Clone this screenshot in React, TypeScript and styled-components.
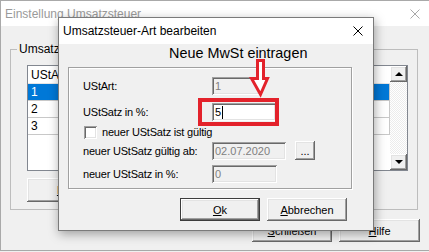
import React from "react";
import styled, { createGlobalStyle, css } from "styled-components";

const GlobalStyle = createGlobalStyle`
  html, body {
    margin: 0;
    padding: 0;
    background: #f0f0f0;
    overflow: hidden;
  }
  body {
    font-family: "Liberation Sans", Arial, sans-serif;
  }
`;

const raised = css`
  background: #f0f0f0;
  box-shadow: inset -1px -1px #696969, inset 1px 1px #fff, inset -2px -2px #a0a0a0,
    inset 2px 2px #e3e3e3;
`;

const sunken = css`
  box-shadow: inset 1px 1px #a0a0a0, inset -1px -1px #fff, inset 2px 2px #696969,
    inset -2px -2px #e3e3e3;
`;

const Desktop = styled.div`
  position: relative;
  width: 429px;
  height: 252px;
  overflow: hidden;
  background: #f0f0f0;
`;

const Window = styled.div`
  width: 429px;
  height: 251px;
  box-sizing: border-box;
  border: 1px solid #a9a9a9;
  border-right: none;
  display: flex;
  flex-direction: column;
  background: #f0f0f0;
`;

const TitleBar = styled.div<{ $active?: boolean }>`
  height: ${(p) => (p.$active ? 26 : 25)}px;
  flex: none;
  display: flex;
  align-items: center;
  justify-content: space-between;
  background: #fff;
  padding: 0 ${(p) => (p.$active ? 10 : 9)}px 0 4px;
  font-size: 12px;
  color: ${(p) => (p.$active ? "#000" : "#9a9a9a")};
`;

const WindowBody = styled.div`
  display: flex;
  flex-direction: column;
  padding: 0 10px 0 9px;
`;

const GroupBox = styled.div`
  margin-top: 23px;
  width: 408px;
  height: 161px;
  box-sizing: border-box;
  border: 1px solid #bdbdbd;
  display: flex;
  flex-direction: column;
`;

const Legend = styled.span`
  align-self: flex-start;
  margin: -8px 0 0 6px;
  padding: 0 2px;
  background: #f0f0f0;
  font-size: 12px;
  line-height: 14px;
  color: #000;
`;

const ListView = styled.div`
  margin: 9px 0 0 16px;
  width: 381px;
  height: 106px;
  box-sizing: border-box;
  border: 1px solid #828790;
  background: #fff;
  display: flex;
`;

const Table = styled.div`
  flex: 1;
  display: flex;
  flex-direction: column;
  font-size: 12px;
`;

const HeaderRow = styled.div`
  height: 17px;
  border-bottom: 1px solid #e5e5e5;
  display: flex;
  align-items: center;
  padding-left: 3px;
  color: #000;
`;

const TableRow = styled.div<{ $selected?: boolean }>`
  height: 16px;
  border-bottom: 1px solid #c8c8c8;
  border-right: 1px solid #c8c8c8;
  display: flex;
  align-items: center;
  padding-left: 3px;
  background: ${(p) => (p.$selected ? "#0078d7" : "#fff")};
  color: ${(p) => (p.$selected ? "#fff" : "#000")};
`;

const ScrollBar = styled.div`
  width: 17px;
  display: flex;
  flex-direction: column;
  background: #f4f4f4;
  background-image: repeating-conic-gradient(#fff 0 25%, #ececec 0 50%);
  background-size: 2px 2px;
`;

const ScrollButton = styled.div`
  ${raised};
  height: 16px;
  display: flex;
  align-items: center;
  justify-content: center;
`;

const ScrollTrack = styled.div`
  flex: 1;
`;

const Triangle = styled.span<{ $down?: boolean }>`
  width: 0;
  height: 0;
  border-left: 4px solid transparent;
  border-right: 4px solid transparent;
  ${(p) =>
    p.$down ? "border-top: 4px solid #000;" : "border-bottom: 4px solid #000;"}
`;

const Button = styled.button<{ $width?: number; $height?: number; $default?: boolean }>`
  ${raised};
  width: ${(p) => p.$width ?? 80}px;
  height: ${(p) => p.$height ?? 23}px;
  box-sizing: border-box;
  border: ${(p) => (p.$default ? "1px solid #3c3c3c" : "none")};
  padding: 0;
  font-family: "Liberation Sans", Arial, sans-serif;
  font-size: 11px;
  color: #000;
  display: flex;
  align-items: center;
  justify-content: center;
  u {
    text-decoration: underline;
  }
`;

const GroupButtons = styled.div`
  margin: 7px 0 0 16px;
  display: flex;
  gap: 8px;
`;

const WindowButtons = styled.div`
  margin-top: 9px;
  display: flex;
  justify-content: flex-end;
  gap: 7px;
  margin-right: -1px;
`;

/* dialog on top of the main window */
const Dialog = styled.div`
  position: absolute;
  left: 58px;
  top: 17px;
  width: 316px;
  height: 214px;
  box-sizing: border-box;
  border: 1px solid #7a7a7a;
  background: #f0f0f0;
  box-shadow: 1px 3px 10px rgba(0, 0, 0, 0.35);
  display: flex;
  flex-direction: column;
`;

const Heading = styled.div`
  height: 18px;
  line-height: 18px;
  padding-left: 110px;
  font-size: 14.4px;
  color: #000;
`;

const Frame = styled.div`
  margin: 5px 0 0 9px;
  width: 284px;
  height: 122px;
  box-sizing: border-box;
  border: 1px solid #a0a0a0;
  box-shadow: inset 1px 1px #fff, 1px 1px #fff;
  padding: 9px 0 0 14px;
  display: flex;
  flex-direction: column;
`;

const FormRow = styled.div<{ $gap?: number }>`
  margin-top: ${(p) => p.$gap ?? 0}px;
  height: 18px;
  display: grid;
  grid-template-columns: 120px auto auto;
  justify-content: start;
  align-items: center;
  column-gap: 9px;
  font-size: 11px;
  letter-spacing: -0.2px;
  color: #000;
`;

const CheckRow = styled.div<{ $gap?: number }>`
  margin-top: ${(p) => p.$gap ?? 0}px;
  height: 18px;
  display: flex;
  align-items: center;
  gap: 5px;
  padding-left: 1px;
  font-size: 11px;
  letter-spacing: -0.2px;
  color: #000;
`;

const CheckBox = styled.span`
  ${sunken};
  width: 13px;
  height: 13px;
  background: #fff;
`;

const Field = styled.div<{ $width: number; $disabled?: boolean }>`
  ${sunken};
  width: ${(p) => p.$width}px;
  height: 18px;
  box-sizing: border-box;
  padding-left: 3px;
  display: flex;
  align-items: center;
  background: ${(p) => (p.$disabled ? "#f0f0f0" : "#fff")};
  color: ${(p) => (p.$disabled ? "#808080" : "#000")};
  font-size: 11px;
  letter-spacing: 0;
`;

const Caret = styled.span`
  width: 1px;
  height: 13px;
  margin-left: 1px;
  background: #000;
`;

const DialogButtons = styled.div`
  margin: 9px 0 0 121px;
  display: flex;
  gap: 7px;
`;

/* red annotation drawn over the screenshot */
const Marker = styled.div`
  position: absolute;
  left: 198px;
  top: 98px;
  width: 81px;
  height: 28px;
  box-sizing: border-box;
  border: 4px solid #e3222b;
`;

const ArrowWrap = styled.svg`
  position: absolute;
  left: 249px;
  top: 57px;
`;

function CloseGlyph({ color, size }: { color: string; size: number }) {
  return (
    <svg width={size} height={size} viewBox={`0 0 ${size} ${size}`}>
      <path
        d={`M0.5 0.5 L${size - 0.5} ${size - 0.5} M${size - 0.5} 0.5 L0.5 ${size - 0.5}`}
        stroke={color}
        strokeWidth={1}
      />
    </svg>
  );
}

export default function App() {
  return (
    <>
      <GlobalStyle />
      <Desktop>
        <Window>
          <TitleBar>
            Einstellung Umsatzsteuer
            <CloseGlyph color="#a8a8a8" size={10} />
          </TitleBar>
          <WindowBody>
            <GroupBox>
              <Legend>Umsatzsteuersätze</Legend>
              <ListView>
                <Table>
                  <HeaderRow>UStArt</HeaderRow>
                  <TableRow $selected>1</TableRow>
                  <TableRow>2</TableRow>
                  <TableRow>3</TableRow>
                </Table>
                <ScrollBar>
                  <ScrollButton>
                    <Triangle />
                  </ScrollButton>
                  <ScrollTrack />
                  <ScrollButton>
                    <Triangle $down />
                  </ScrollButton>
                </ScrollBar>
              </ListView>
              <GroupButtons>
                <Button $width={80} $height={24}>
                  <span>
                    <u>N</u>eu
                  </span>
                </Button>
              </GroupButtons>
            </GroupBox>
            <WindowButtons>
              <Button $width={80}>
                <span>
                  <u>S</u>chließen
                </span>
              </Button>
              <Button $width={81}>
                <span>
                  <u>H</u>ilfe
                </span>
              </Button>
            </WindowButtons>
          </WindowBody>
        </Window>

        <Dialog>
          <TitleBar $active>
            Umsatzsteuer-Art bearbeiten
            <CloseGlyph color="#000" size={10} />
          </TitleBar>
          <Heading>Neue MwSt eintragen</Heading>
          <Frame>
            <FormRow>
              <span>UStArt:</span>
              <Field $width={48} $disabled>
                1
              </Field>
            </FormRow>
            <FormRow $gap={8}>
              <span>UStSatz in %:</span>
              <Field $width={64}>
                5
                <Caret />
              </Field>
            </FormRow>
            <CheckRow $gap={2}>
              <CheckBox />
              <span>neuer UStSatz ist gültig</span>
            </CheckRow>
            <FormRow>
              <span>neuer UStSatz gültig ab:</span>
              <Field $width={74} $disabled>
                02.07.2020
              </Field>
              <Button $width={20} $height={19}>
                ...
              </Button>
            </FormRow>
            <FormRow $gap={6}>
              <span>neuer UStSatz in %:</span>
              <Field $width={65} $disabled>
                0
              </Field>
            </FormRow>
          </Frame>
          <DialogButtons>
            <Button $default>
              <span>
                <u>O</u>k
              </span>
            </Button>
            <Button>
              <span>
                <u>A</u>bbrechen
              </span>
            </Button>
          </DialogButtons>
        </Dialog>

        <ArrowWrap width={22} height={42} viewBox="0 0 22 42">
          <path
            d="M8.5 3.5 H14.5 V21.5 H18.5 L11.5 37.5 L2.5 21.5 H8.5 Z"
            fill="#fff"
            stroke="#e3222b"
            strokeWidth={3}
            strokeLinejoin="miter"
          />
        </ArrowWrap>
        <Marker />
      </Desktop>
    </>
  );
}
